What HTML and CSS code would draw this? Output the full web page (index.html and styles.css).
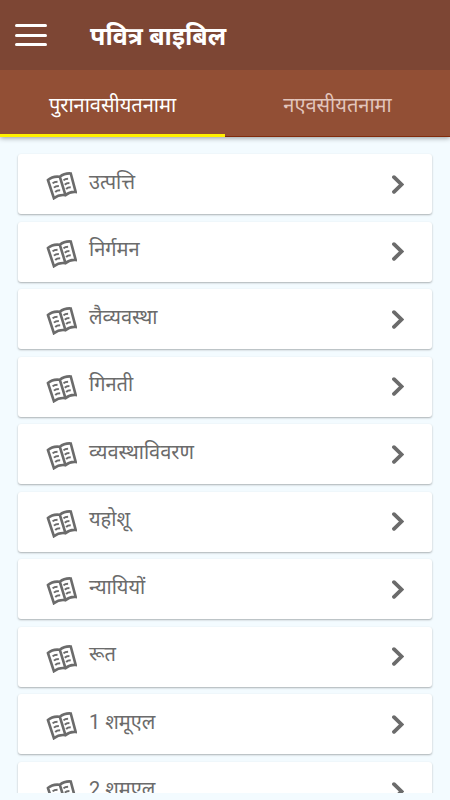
FILE: index.html
```html
<!DOCTYPE html>
<html lang="hi">
<head>
<meta charset="utf-8">
<title>पवित्र बाइबिल</title>
<link rel="stylesheet" href="styles.css">
</head>
<body>
<svg class="defs" width="0" height="0">
  <symbol id="book" viewBox="0 0 94 87">
    <path d="M6 27Q20 14 42 17Q55 6 75 7L90 63Q73 61 59 73Q40 70 24 82Z M42 17L59 73" fill="none" stroke="currentColor" stroke-width="8" stroke-linejoin="miter"/>
    <path d="M20 37Q25 32 35 32M24 50Q29 45 39 45M28 63Q33 58 43 58M53 28Q58 23 67 23M57 41Q62 36 71 36M61 54Q66 49 75 49" fill="none" stroke="currentColor" stroke-width="6"/>
  </symbol>
  <symbol id="chevron" viewBox="0 0 12 20">
    <path d="M2 2.2L9.5 9.5L2 16.8" fill="none" stroke="currentColor" stroke-width="3.8" stroke-linecap="round" stroke-linejoin="miter"/>
  </symbol>
</svg>
<div class="app">
  <header class="header">
    <div class="bar">
      <button class="menu" aria-label="मेनू"><i></i><i></i><i></i></button>
      <h1 class="title">पवित्र बाइबिल</h1>
    </div>
    <nav class="tabs">
      <a class="tab active">पुरानावसीयतनामा</a>
      <a class="tab">नएवसीयतनामा</a>
    </nav>
  </header>
  <main class="list">
    <div class="card"><svg class="book"><use href="#book"/></svg><span class="name">उत्पत्ति</span><svg class="chevron"><use href="#chevron"/></svg></div>
    <div class="card"><svg class="book"><use href="#book"/></svg><span class="name">निर्गमन</span><svg class="chevron"><use href="#chevron"/></svg></div>
    <div class="card"><svg class="book"><use href="#book"/></svg><span class="name">लैव्यवस्था</span><svg class="chevron"><use href="#chevron"/></svg></div>
    <div class="card"><svg class="book"><use href="#book"/></svg><span class="name">गिनती</span><svg class="chevron"><use href="#chevron"/></svg></div>
    <div class="card"><svg class="book"><use href="#book"/></svg><span class="name">व्यवस्थाविवरण</span><svg class="chevron"><use href="#chevron"/></svg></div>
    <div class="card"><svg class="book"><use href="#book"/></svg><span class="name">यहोशू</span><svg class="chevron"><use href="#chevron"/></svg></div>
    <div class="card"><svg class="book"><use href="#book"/></svg><span class="name">न्यायियों</span><svg class="chevron"><use href="#chevron"/></svg></div>
    <div class="card"><svg class="book"><use href="#book"/></svg><span class="name">रूत</span><svg class="chevron"><use href="#chevron"/></svg></div>
    <div class="card"><svg class="book"><use href="#book"/></svg><span class="name">1 शमूएल</span><svg class="chevron"><use href="#chevron"/></svg></div>
    <div class="card"><svg class="book"><use href="#book"/></svg><span class="name">2 शमूएल</span><svg class="chevron"><use href="#chevron"/></svg></div>
  </main>
</div>
</body>
</html>
```
FILE: styles.css
```css
* { box-sizing: border-box; }
body {
  margin: 0;
  background: #f3fbff;
  font-family: Roboto, "Noto Sans", "Noto Sans Devanagari", sans-serif;
}
.defs { display: block; height: 0; }
.app {
  width: 450px;
  height: 800px;
  padding-bottom: 7px;
  display: flex;
  flex-direction: column;
  overflow: hidden;
}
.header {
  flex: none;
  height: 137px;
  background: #924f35;
  box-shadow: 0 1px 5px rgba(0, 0, 0, .4);
  z-index: 1;
}
.bar {
  height: 70px;
  padding-left: 15px;
  display: flex;
  align-items: center;
  background: #7d4634;
}
.menu {
  width: 32px;
  height: 22px;
  padding: 0;
  border: 0;
  background: none;
  display: flex;
  flex-direction: column;
  justify-content: space-between;
}
.menu i {
  height: 3px;
  width: 32px;
  border-radius: 2px;
  background: #fff;
}
.title {
  margin: 4px 0 0 43px;
  color: #fff;
  font-size: 25px;
  font-weight: 700;
  line-height: 36px;
  white-space: nowrap;
}
.tabs {
  height: 67px;
  display: flex;
  border-bottom: 1px solid #822b0b;
}
.tab {
  flex: 1;
  height: 67px;
  padding-top: 6px;
  display: flex;
  align-items: center;
  justify-content: center;
  color: #e2c5bc;
  font-size: 20px;
  line-height: 30px;
  border-bottom: 3px solid transparent;
}
.tab.active {
  color: #fff;
  border-color: #fff000;
}
.list {
  flex: 1;
  min-height: 0;
  padding: 17px 18px 0 17.5px;
  display: flex;
  flex-direction: column;
  gap: 7.5px;
  overflow: hidden;
}
.card {
  flex: none;
  height: 60px;
  padding: 0 28.5px;
  display: flex;
  align-items: center;
  background: #fff;
  border-radius: 3px;
  box-shadow: 0 1px 2px rgba(0, 0, 0, .3);
  color: #6b6b6b;
}
.book {
  width: 31px;
  height: 29px;
  margin-top: 3px;
}
.name {
  flex: 1;
  margin: -5px 0 0 12px;
  font-size: 20px;
  line-height: 30px;
}
.chevron {
  width: 12px;
  height: 20px;
  margin-top: 1px;
}
```
